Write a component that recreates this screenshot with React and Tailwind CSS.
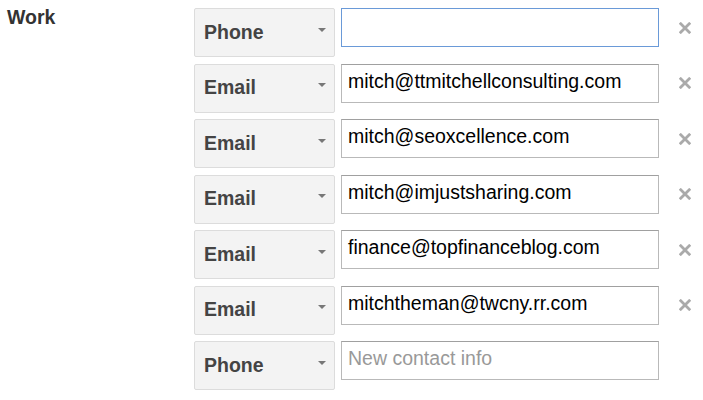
import React from 'react';

const rows = [
  { type: 'Phone', value: '', focused: true },
  { type: 'Email', value: 'mitch@ttmitchellconsulting.com' },
  { type: 'Email', value: 'mitch@seoxcellence.com' },
  { type: 'Email', value: 'mitch@imjustsharing.com' },
  { type: 'Email', value: 'finance@topfinanceblog.com' },
  { type: 'Email', value: 'mitchtheman@twcny.rr.com' },
  { type: 'Phone', value: '', placeholder: 'New contact info', isNew: true },
];

const TypeSelect = ({ label }) => (
  <div className="flex h-[49px] w-[141px] shrink-0 items-center justify-between rounded-[2px] border border-[#dcdcdc] bg-[#f3f3f3] pl-[9px] pr-[8px]">
    <span className="text-[19.5px] font-bold text-[#444]">{label}</span>
    <span className="mb-[6px] h-0 w-0 border-x-[4.5px] border-t-[4px] border-x-transparent border-t-[#777]"></span>
  </div>
);

const RemoveIcon = () => (
  <svg width="12" height="12" viewBox="0 0 12 12" className="text-[#aaa]">
    <path d="M0.8 0.8 L11.2 11.2 M11.2 0.8 L0.8 11.2" stroke="currentColor" strokeWidth="2.8" />
  </svg>
);

export default function App() {
  return (
    <div className="flex h-[400px] w-[703px] bg-white font-['Liberation_Sans',Arial,sans-serif]">
      {/* Label */}
      <div className="w-[194px] shrink-0 pl-[7px] pt-[6px]">
        <span className="text-[19.5px] font-bold leading-[22px] text-[#333]">Work</span>
      </div>

      {/* Contact rows */}
      <div className="flex flex-col gap-[6.5px] pt-[8px]">
        {rows.map((row, i) => (
          <div key={i} className="flex items-start">
            <TypeSelect label={row.type} />
            <div
              className={`ml-[6px] flex h-[39px] w-[318px] items-center border px-[6px] pb-[3px] text-[19.5px] ${
                row.focused ? 'border-[#6a9ad8]' : 'border-[#b9b9b9] border-t-[#a0a0a0]'
              }`}
            >
              {row.value ? (
                <span className="text-black">{row.value}</span>
              ) : (
                <span className="text-[#999]">{row.placeholder}</span>
              )}
            </div>
            {!row.isNew && (
              <div className="ml-[20px] flex h-[39px] items-center">
                <RemoveIcon />
              </div>
            )}
          </div>
        ))}
      </div>
    </div>
  );
}
